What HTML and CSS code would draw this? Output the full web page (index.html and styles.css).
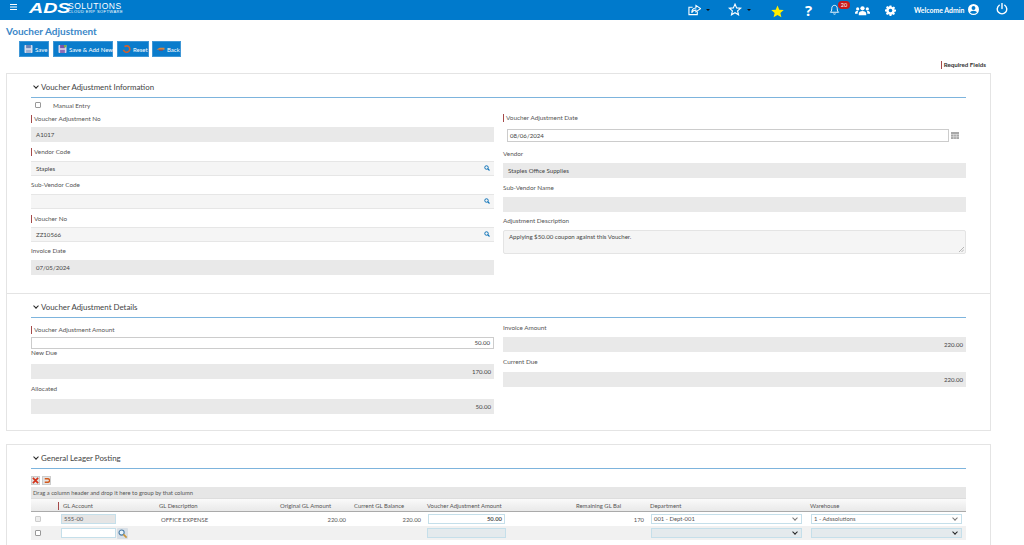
FILE: index.html
```html
<!DOCTYPE html>
<html>
<head>
	<meta charset="UTF-8">
	<title>Voucher Adjustment</title>
	<link rel="stylesheet" href="styles.css">
</head>
<body>

<div class="topbar">
	<svg class="menu-icon" viewBox="0 0 7 6"><path d="M0 .5h7M0 3h7M0 5.5h7" stroke="#fff" stroke-width="1.1"/></svg>
	<div class="logo">
		<span class="logo-ads">ADS</span>
		<div class="logo-text">
			<span class="logo-name">SOLUTIONS</span>
			<span class="logo-sub">CLOUD ERP SOFTWARE</span>
		</div>
	</div>
	<div class="top-icons">
		<svg class="ti ti-share" viewBox="0 0 14 12"><path d="M10 7.500V11H1V3h4" fill="none" stroke="#fff" stroke-width="1.200"/><path d="M8.500 1l5 3.500-5 3.500V6C6 6 5 7 4 9c0-3 1.500-5 4.500-5.200z" fill="none" stroke="#fff" stroke-width="1.100"/></svg>
		<span class="caret caret-1"></span>
		<svg class="ti ti-star" viewBox="0 0 24 24"><path d="M12 2l3 7 7.500.6-5.700 4.900 1.800 7.300L12 18l-6.600 3.800 1.800-7.300L1.500 9.600 9 9z" fill="none" stroke="#fff" stroke-width="2"/></svg>
		<span class="caret caret-2"></span>
		<svg class="ti ti-fav" viewBox="0 0 24 24"><path d="M12 1l3.300 7.600 8.200.7-6.200 5.400 1.900 8L12 18.500l-7.200 4.200 1.900-8L.5 9.300l8.200-.7z" fill="#ffee00"/></svg>
		<span class="ti-help">?</span>
		<div class="bell">
			<svg class="ti ti-bell" viewBox="0 0 24 24"><path d="M12 3c4 0 6 3 6 7 0 5 1 6 3 8H3c2-2 3-3 3-8 0-4 2-7 6-7zM9.500 21c.5 1.500 4.500 1.500 5 0" fill="none" stroke="#fff" stroke-width="2"/></svg>
			<span class="badge">20</span>
		</div>
		<svg class="ti ti-users" viewBox="0 0 28 20"><circle cx="14" cy="6" r="4" fill="#fff"/><path d="M7 19v-3c0-3 3-5 7-5s7 2 7 5v3z" fill="#fff"/><circle cx="5" cy="7" r="3" fill="#fff"/><circle cx="23" cy="7" r="3" fill="#fff"/><path d="M0 16v-2c0-2 2-3 5-3l1 1c-1 1-1 2-1 4zM28 16v-2c0-2-2-3-5-3l-1 1c1 1 1 2 1 4z" fill="#fff"/></svg>
		<svg class="ti ti-gear" viewBox="0 0 24 24"><path fill="#fff" fill-rule="evenodd" d="M10 1h4l.6 3 2 .9 2.600-1.700 2.800 2.800-1.700 2.600.9 2L24 10v4l-3 .6-.9 2 1.700 2.600-2.800 2.800-2.600-1.700-2 .9-.4 2.800h-4l-.6-3-2-.9-2.600 1.700-2.800-2.800 1.700-2.600-.9-2L0 14v-4l3-.6.9-2-1.700-2.600L5 2l2.600 1.700 2-.9zM12 8a4 4 0 100 8 4 4 0 000-8z"/></svg>
		<span class="welcome">Welcome Admin</span>
		<svg class="ti ti-user" viewBox="0 0 24 24"><path fill="#fff" fill-rule="evenodd" d="M12 0a12 12 0 100 24 12 12 0 000-24zm0 4.500a4.200 4.200 0 110 8.400 4.200 4.200 0 010-8.400zM4.500 18.500c1-2.500 3.500-4 7.500-4s6.500 1.500 7.500 4c-2 2-4.500 3-7.500 3s-5.500-1-7.500-3z"/></svg>
		<svg class="ti ti-power" viewBox="0 0 24 24"><path d="M12 1v10M6.500 4.500a9.500 9.500 0 1011 0" fill="none" stroke="#fff" stroke-width="2.800" stroke-linecap="round"/></svg>
	</div>
</div>

<h1 class="page-title">Voucher Adjustment</h1>

<div class="toolbar">
	<a class="btn btn-save">
		<svg viewBox="0 0 10 10"><rect width="10" height="10" rx="1" fill="#d5dcec"/><rect x="2" y="0" width="6" height="4" fill="#6a83b8"/><rect x="2" y="6" width="6" height="4" fill="#9fb0cf"/></svg>
		Save
	</a>
	<a class="btn btn-add">
		<svg viewBox="0 0 10 10"><rect width="10" height="10" rx="1" fill="#dcd3ea"/><rect x="2" y="0" width="6" height="4" fill="#7a55a8"/><rect x="2" y="6" width="6" height="4" fill="#8d6db8"/><rect x="7" width="3" height="3" fill="#7fb34a"/></svg>
		Save &amp; Add New
	</a>
	<a class="btn btn-reset">
		<svg viewBox="0 0 10 10"><path d="M2.500 2a4 4 0 11-1.300 4" fill="none" stroke="#d0602c" stroke-width="2"/></svg>
		Reset
	</a>
	<a class="btn btn-back">
		<svg viewBox="0 0 10 10"><path d="M0 5.500L4 3.500h6v2.500H4z" fill="#d9843a"/><path d="M3 6.500h5" stroke="#b33" stroke-width="1"/></svg>
		Back
	</a>
</div>

<div class="required-note"><span class="req">Required Fields</span></div>

<div class="card card-info">
	<div class="card-head"><span class="chev"></span>Voucher Adjustment Information</div>
	<div class="cols">
		<div class="col">
			<label class="check-row"><input type="checkbox"><span>Manual Entry</span></label>
			<div class="field">
				<div class="lbl"><span class="req">Voucher Adjustment No</span></div>
				<div class="inp ro">A1017</div>
			</div>
			<div class="field">
				<div class="lbl"><span class="req">Vendor Code</span></div>
				<div class="inp lookup">Staples<svg class="search" viewBox="0 0 12 12"><circle cx="5" cy="5" r="3.500" fill="none" stroke="#0f73b8" stroke-width="2"/><path d="M7.500 7.500L11 11" stroke="#0f73b8" stroke-width="2.200"/></svg></div>
			</div>
			<div class="field">
				<div class="lbl">Sub-Vendor Code</div>
				<div class="inp lookup"><svg class="search" viewBox="0 0 12 12"><circle cx="5" cy="5" r="3.500" fill="none" stroke="#0f73b8" stroke-width="2"/><path d="M7.500 7.500L11 11" stroke="#0f73b8" stroke-width="2.200"/></svg></div>
			</div>
			<div class="field">
				<div class="lbl"><span class="req">Voucher No</span></div>
				<div class="inp lookup">ZZ10566<svg class="search" viewBox="0 0 12 12"><circle cx="5" cy="5" r="3.500" fill="none" stroke="#0f73b8" stroke-width="2"/><path d="M7.500 7.500L11 11" stroke="#0f73b8" stroke-width="2.200"/></svg></div>
			</div>
			<div class="field">
				<div class="lbl">Invoice Date</div>
				<div class="inp ro">07/05/2024</div>
			</div>
		</div>
		<div class="col col-right">
			<div class="field">
				<div class="lbl lbl-high"><span class="req">Voucher Adjustment Date</span></div>
				<div class="date-row">
					<div class="inp date">08/06/2024</div>
					<svg class="cal" viewBox="0 0 8 7"><rect width="8" height="7" fill="#a8a8a8"/><path d="M0 2.500h8M0 4.700h8M2.700 2v5M5.300 2v5" stroke="#e4e4e4" stroke-width=".6"/></svg>
				</div>
			</div>
			<div class="field">
				<div class="lbl">Vendor</div>
				<div class="inp ro">Staples Office Supplies</div>
			</div>
			<div class="field">
				<div class="lbl">Sub-Vendor Name</div>
				<div class="inp ro"></div>
			</div>
			<div class="field">
				<div class="lbl">Adjustment Description</div>
				<div class="inp area">Applying $50.00 coupon against this Voucher.<svg class="grip" viewBox="0 0 6 6"><path d="M0 6l6-6M3 6l3-3" stroke="#888" stroke-width=".7"/></svg></div>
			</div>
		</div>
	</div>
</div>

<div class="card card-details">
	<div class="card-head"><span class="chev"></span>Voucher Adjustment Details</div>
	<div class="cols cols-details">
		<div class="col">
			<div class="field">
				<div class="lbl lbl-low"><span class="req">Voucher Adjustment Amount</span></div>
				<div class="inp amount edit">50.00</div>
			</div>
			<div class="field">
				<div class="lbl lbl-tight">New Due</div>
				<div class="inp ro amount">170.00</div>
			</div>
			<div class="field">
				<div class="lbl lbl-tall">Allocated</div>
				<div class="inp ro amount">50.00</div>
			</div>
		</div>
		<div class="col">
			<div class="field">
				<div class="lbl">Invoice Amount</div>
				<div class="inp ro amount">220.00</div>
			</div>
			<div class="field">
				<div class="lbl lbl-tall">Current Due</div>
				<div class="inp ro amount">220.00</div>
			</div>
		</div>
	</div>
</div>

<div class="card card-posting">
	<div class="card-head"><span class="chev"></span>General Leager Posting</div>
	<div class="grid-tools">
		<span class="tool"><svg viewBox="0 0 8 8"><path d="M1 1l6 6M7 1L1 7" stroke="#d3341c" stroke-width="2"/></svg></span>
		<span class="tool"><svg viewBox="0 0 8 8"><path d="M2 2h3.500a2 2 0 010 4H2" fill="none" stroke="#d2591c" stroke-width="1.500"/></svg></span>
	</div>
	<div class="group-bar">Drag a column header and drop it here to group by that column</div>
	<table class="grid">
		<colgroup>
			<col class="c-check"><col class="c-acct"><col class="c-desc"><col class="c-orig"><col class="c-curr"><col class="c-adj"><col class="c-rem"><col class="c-dept"><col class="c-wh">
		</colgroup>
		<tr class="grid-head">
			<th></th>
			<th class="th-acct"><span class="req">GL Account</span></th>
			<th>GL Description</th>
			<th class="th-pad">Original GL Amount</th>
			<th class="th-pad">Current GL Balance</th>
			<th>Voucher Adjustment Amount</th>
			<th class="th-rem">Remaining GL Bal</th>
			<th>Department</th>
			<th>Warehouse</th>
		</tr>
		<tr class="row-data">
			<td class="center"><input type="checkbox" disabled></td>
			<td><div class="cell-inp acct">555-00</div></td>
			<td class="desc">OFFICE EXPENSE</td>
			<td class="num">220.00</td>
			<td class="num">220.00</td>
			<td><div class="cell-inp adj">50.00</div></td>
			<td class="num">170</td>
			<td><div class="cell-inp sel">001 - Dept-001<span class="sel-arrow"></span></div></td>
			<td><div class="cell-inp sel">1 - Adssolutions<span class="sel-arrow"></span></div></td>
		</tr>
		<tr class="row-new">
			<td class="center"><input type="checkbox"></td>
			<td class="acct-new">
				<div class="cell-inp new-acct"></div>
				<svg class="glass" viewBox="0 0 12 12"><rect width="12" height="12" rx="1" fill="#d8dfe6"/><circle cx="5" cy="5" r="2.800" fill="#e8f4fb" stroke="#4b7ea8" stroke-width="1.200"/><path d="M7 7l3.500 3.500" stroke="#c8953a" stroke-width="1.800"/></svg>
			</td>
			<td></td>
			<td></td>
			<td></td>
			<td><div class="cell-inp blank"></div></td>
			<td></td>
			<td><div class="cell-inp sel blank"><span class="sel-arrow dark"></span></div></td>
			<td><div class="cell-inp sel blank"><span class="sel-arrow dark"></span></div></td>
		</tr>
	</table>
</div>

</body>
</html>
```

FILE: styles.css
```css
html, body{
	margin: 0;
	height: 545px;
	overflow: hidden;
}
body{
	font-family: Lato, "Open Sans", sans-serif;
	font-size: 6.35px;
	color: #555;
	background-color: #fff;
}

.req{
	display: inline-block;
	vertical-align: middle;
	border-left: 1px solid #a54a4a;
	padding-left: 2px;
	line-height: 8px;
}

/* top bar */
.topbar{
	height: 20px;
	background-color: #007acc;
	display: flex;
	align-items: center;
	color: #fff;
}
.menu-icon{
	width: 7px;
	height: 6px;
	margin-left: 10px;
	margin-bottom: 6px;
}
.logo{
	display: flex;
	align-items: center;
	margin-left: 12px;
	margin-bottom: 4px;
}
.logo-ads{
	font-family: "Liberation Sans", sans-serif;
	font-size: 14px;
	line-height: 13px;
	font-weight: bold;
	font-style: italic;
	width: 38px;
	transform: scaleX(1.4);
	transform-origin: left center;
}
.logo-text{
	display: flex;
	flex-direction: column;
	margin-left: 1px;
}
.logo-name{
	font-family: "Liberation Sans", sans-serif;
	font-size: 8.500px;
	line-height: 7px;
	letter-spacing: .5px;
}
.logo-sub{
	font-family: "Liberation Sans", sans-serif;
	font-size: 4px;
	line-height: 4px;
	letter-spacing: .45px;
}
.top-icons{
	margin-left: auto;
	display: flex;
	align-items: center;
	height: 20px;
	margin-right: 16px;
}
.ti{
	display: block;
}
.ti-share{
	width: 13px;
	height: 12px;
	margin-bottom: 1px;
}
.caret{
	width: 0;
	height: 0;
	border: 2px solid transparent;
	border-top-color: #111;
	border-bottom: 0;
	margin-left: 5px;
}
.ti-star{
	width: 14px;
	height: 13px;
	margin-left: 18px;
	margin-bottom: 1px;
}
.ti-fav{
	width: 13px;
	height: 13px;
	margin-left: 20px;
	margin-top: 3px;
}
.ti-help{
	font-family: "Open Sans", sans-serif;
	font-size: 15px;
	font-weight: bold;
	line-height: 20px;
	margin-left: 21px;
	width: 9px;
}
.bell{
	position: relative;
	margin-left: 15px;
	margin-bottom: 2px;
}
.ti-bell{
	width: 11px;
	height: 13px;
}
.badge{
	position: absolute;
	left: 9px;
	top: -2px;
	width: 12px;
	height: 8px;
	border-radius: 4px;
	background-color: #c8191c;
	font-size: 5.500px;
	line-height: 8px;
	text-align: center;
}
.ti-users{
	width: 15px;
	height: 11px;
	margin-left: 15px;
}
.ti-gear{
	width: 11px;
	height: 11px;
	margin-left: 15px;
}
.welcome{
	font-size: 6.900px;
	font-weight: bold;
	margin-left: 18px;
	width: 51px;
	white-space: nowrap;
}
.ti-user{
	width: 11px;
	height: 11px;
	margin-left: 3px;
	margin-bottom: 1px;
}
.ti-power{
	width: 12px;
	height: 12px;
	margin-left: 17px;
	margin-bottom: 2px;
}

/* title + buttons */
.page-title{
	margin: 5px 0 0 6px;
	font-size: 10px;
	line-height: 12px;
	font-weight: bold;
	color: #3a87c8;
}
.toolbar{
	display: flex;
	margin: 4px 0 0 19px;
}
.btn{
	display: flex;
	align-items: center;
	gap: 2px;
	box-sizing: border-box;
	height: 16px;
	padding-left: 5px;
	background-color: #0a7ccc;
	box-shadow: inset 0 0 0 1px #3f97d6;
	color: #fff;
	font-size: 6px;
	white-space: nowrap;
}
.btn svg{
	width: 9px;
	height: 8px;
}
.btn-save{ width: 30px; margin-right: 4px; }
.btn-add{ width: 60px; margin-right: 4px; }
.btn-reset{ width: 32px; margin-right: 3px; }
.btn-back{ width: 29px; padding-left: 4px; }
.required-note{
	text-align: right;
	margin: 4px 38px 0 0;
	font-size: 6.200px;
	line-height: 8px;
	font-weight: bold;
	color: #333;
}

/* cards */
.card{
	width: 985px;
	margin-left: 6px;
	box-sizing: border-box;
	border: 1px solid #e4e4e4;
	padding: 0 24px;
	background-color: #fff;
}
.card-info{
	height: 221px;
	margin-top: 4px;
}
.card-details{
	height: 138px;
	margin-top: -1px;
}
.card-posting{
	height: 110px;
	margin-top: 13px;
}
.card-head{
	box-sizing: content-box;
	padding-top: 7px;
	height: 16px;
	font-size: 7.900px;
	line-height: 13px;
	color: #444;
	border-bottom: 1px solid #7db4dd;
}
.chev{
	display: inline-block;
	width: 3px;
	height: 3px;
	border-left: 1.200px solid #222;
	border-bottom: 1.200px solid #222;
	transform: rotate(-45deg);
	margin: 0 3px 2px 3px;
}
.cols{
	display: flex;
	gap: 9px;
}
.col{
	width: 463px;
}
.col-right{
	padding-top: 14px;
}
.cols-details{
	padding-top: 2px;
}

.check-row{
	display: flex;
	align-items: center;
	height: 12px;
	padding-top: 2px;
	box-sizing: border-box;
	padding-left: 4px;
}
input[type="checkbox"]{
	appearance: none;
	box-sizing: border-box;
	width: 6px;
	height: 6px;
	margin: 0;
	border: 1px solid #999;
	border-radius: 1px;
	background-color: #fff;
}
input[type="checkbox"]:disabled{
	border-color: #ccc;
	background-color: #eee;
}
.check-row input{
	margin-right: 12px;
}

.lbl{
	height: 17px;
	line-height: 15px;
	color: #555;
}
.lbl-high{
	line-height: 9px;
}
.lbl-low{
	line-height: 18px;
}
.lbl-tight{
	height: 15px;
	line-height: 7px;
}
.lbl-tall{
	height: 18px;
	line-height: 16px;
}
.inp{
	box-sizing: border-box;
	height: 15px;
	margin-bottom: 1.250px;
	line-height: 15px;
	padding-left: 5px;
	position: relative;
	font-size: 6.100px;
	color: #444;
}
.ro{
	background-color: #e9e9e9;
}
.lookup{
	background-color: #f5f5f5;
	border-top: 1px solid #e6e6e6;
	border-bottom: 1px solid #e6e6e6;
	line-height: 13px;
}
.search{
	position: absolute;
	right: 4px;
	top: 3px;
	width: 6px;
	height: 6px;
}
.amount{
	text-align: right;
	padding-right: 3px;
}
.edit{
	height: 12px;
	margin-bottom: 0;
	line-height: 10px;
	border: 1px solid #ccc;
}
.date-row{
	display: flex;
	align-items: center;
	margin-bottom: 4px;
}
.date{
	width: 442px;
	margin: 0 0 0 4px;
	height: 13px;
	line-height: 11px;
	border: 1px solid #ccc;
	padding-left: 2px;
}
.cal{
	width: 8px;
	height: 7px;
	margin-left: 2px;
}
.area{
	height: 24px;
	line-height: 11px;
	background-color: #f5f5f5;
	border: 1px solid #e4e4e4;
	border-radius: 2px;
}
.grip{
	position: absolute;
	right: 1px;
	bottom: 1px;
	width: 5px;
	height: 5px;
}

/* grid */
.grid-tools{
	display: flex;
	gap: 2px;
	height: 11px;
	margin-top: 6px;
	align-items: center;
}
.tool{
	width: 9px;
	height: 9px;
	background-color: #e4e4e4;
	border: 1px solid #ccc;
	box-sizing: border-box;
	display: flex;
}
.tool svg{
	width: 7px;
	height: 7px;
}
.group-bar{
	margin-top: 1px;
	height: 12px;
	line-height: 11px;
	padding-left: 2px;
	font-size: 5.800px;
	background-color: #e6e6e6;
	border-bottom: 1px solid #ddd;
	box-sizing: border-box;
}
.grid{
	width: 935px;
	border-collapse: collapse;
	table-layout: fixed;
}
.c-check{ width: 26px; }
.c-acct{ width: 100px; }
.c-desc{ width: 119px; }
.c-orig{ width: 74px; }
.c-curr{ width: 75px; }
.c-adj{ width: 83px; }
.c-rem{ width: 140px; }
.c-dept{ width: 160px; }
.c-wh{ width: 158px; }
.grid th{
	height: 12px;
	padding: 0 0 0 2px;
	font-size: 5.900px;
	font-weight: normal;
	color: #555;
	text-align: left;
	background: linear-gradient(#fafafa, #e9e9e9);
	border-bottom: 1px solid #aaa;
}
.grid .th-rem{
	padding-left: 68px;
}
.grid .th-pad{
	padding-left: 4px;
}
.grid .th-acct{
	padding-left: 1px;
}
.th-acct .req{
	padding-left: 4px;
}
.grid td{
	padding: 0 2px;
	font-size: 5.900px;
}
.row-data td{
	height: 14px;
}
.row-new td{
	height: 14px;
	background-color: #f1f1f1;
}
.grid .center{
	padding-left: 4px;
}
.center input{
	display: block;
}
.grid .desc{
	padding-left: 4px;
}
.grid .num{
	text-align: right;
	padding-right: 4px;
}
.cell-inp{
	box-sizing: border-box;
	height: 10px;
	line-height: 8px;
	padding: 0 2px;
	border: 1px solid #c5dfea;
	background-color: #fff;
	position: relative;
}
.acct{
	width: 55px;
	margin-left: 2px;
	background-color: #e5e5e5;
}
.adj{
	width: 77px;
	margin-left: 1px;
	text-align: right;
	font-weight: bold;
}
.sel{
	width: 151px;
	margin-left: 1px;
}
.blank{
	background-color: #e4eaed;
}
.acct-new{
	display: flex;
	align-items: center;
	gap: 1px;
}
.new-acct{
	width: 55px;
	margin-left: 2px;
}
.glass{
	width: 11px;
	height: 11px;
}
.sel-arrow{
	position: absolute;
	right: 4px;
	top: 1px;
	width: 3px;
	height: 3px;
	border-right: 1px solid #777;
	border-bottom: 1px solid #777;
	transform: rotate(45deg);
}
.sel-arrow.dark{
	border-color: #222;
}
```
